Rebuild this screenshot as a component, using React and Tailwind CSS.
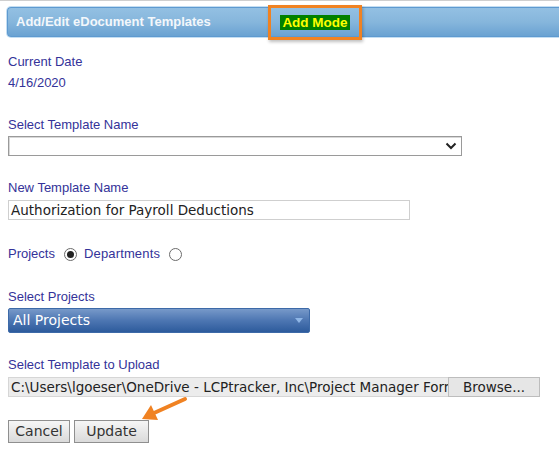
import React from "react";

const label = "block h-4 text-[13px] leading-4 text-[#343399]";
const field = "font-['DejaVu_Sans',sans-serif] text-[13.5px] text-[#222]";

function Radio({ checked }) {
  return (
    <span className="inline-flex h-[13px] w-[13px] items-center justify-center rounded-full border border-[#6b6b6b] bg-white">
      {checked ? <span className="h-[7px] w-[7px] rounded-full bg-[#222]" /> : null}
    </span>
  );
}

export default function App() {
  return (
    <div className="relative h-[459px] w-[559px] overflow-hidden bg-white font-['Liberation_Sans',Arial,sans-serif]">
      <div className="h-px w-full bg-[#cfcfcf]" />

      {/* header */}
      <div className="relative ml-[7px] mt-[6px] flex h-[30px] items-center rounded-l-[4px] border border-r-0 border-[#5e9ad0] bg-gradient-to-b from-[#93c0e3] via-[#86b6dc] to-[#6aa2d2] pl-[8px] shadow-[0_0_0_1px_#c4def2]">
        <span className="text-[13px] font-bold text-[#f3f7fb]">Add/Edit eDocument Templates</span>
        <div className="absolute left-[260px] top-[-3px] flex h-[35px] w-[94px] items-center justify-center border-[3px] border-[#f08222] shadow-[1px_2px_3px_rgba(0,0,0,0.25)]">
          <span className="bg-[#008000] px-[2px] text-[13.5px] font-bold leading-[15px] text-[#ffff00]">Add Mode</span>
        </div>
      </div>

      <div className="pl-[8px]">
        <span className={`${label} mt-[17px]`}>Current Date</span>
        <span className={`${label} mt-[5px]`}>4/16/2020</span>

        <span className={`${label} mt-[26px]`}>Select Template Name</span>
        <div className="mt-[3px] flex h-[20px] w-[454px] items-center justify-end border border-[#9a9a9a] bg-white pr-[4px] shadow-[inset_1px_1px_0_#d8d8d8]">
          <svg width="12" height="8" viewBox="0 0 12 8">
            <path d="M1.5 1.5 L6 6 L10.5 1.5" fill="none" stroke="#222" strokeWidth="2" />
          </svg>
        </div>

        <span className={`${label} mt-[24px]`}>New Template Name</span>
        <div className={`mt-[4px] flex h-[20px] w-[402px] items-center border border-[#cfcfcf] bg-white pl-[2px] ${field}`}>
          Authorization for Payroll Deductions
        </div>

        <div className="mt-[26px] flex h-4 items-center text-[13px] text-[#343399]">
          <span>Projects</span>
          <span className="ml-[9px] mr-[7px] flex"><Radio checked /></span>
          <span className="tracking-[0.15px]">Departments</span>
          <span className="ml-[9px] flex"><Radio /></span>
        </div>

        <span className={`${label} mt-[27px]`}>Select Projects</span>
        <div className="mt-[3px] flex h-[25px] w-[302px] items-center justify-between rounded-[2px] border border-[#3d6aa8] bg-gradient-to-b from-[#7799c9] via-[#4d76b2] to-[#2d5b9c] pl-[4px] pr-[6px]">
          <span className="font-['DejaVu_Sans',sans-serif] text-[14px] text-white">All Projects</span>
          <svg width="8" height="5" viewBox="0 0 8 5">
            <path d="M0 0 L8 0 L4 5 Z" fill="#8fb6e6" />
          </svg>
        </div>

        <span className={`${label} mt-[24px]`}>Select Template to Upload</span>
        <div className="mt-[4px] flex h-[20px] w-[532px]">
          <div className={`flex flex-1 items-center overflow-hidden whitespace-nowrap border border-r-0 border-[#d6d6d6] bg-[#ececec] pl-[2px] ${field}`}>
            C:\Users\lgoeser\OneDrive - LCPtracker, Inc\Project Manager Forms
          </div>
          <div className={`flex w-[92px] items-center justify-center border border-[#bdbdbd] bg-[#e6e6e6] ${field}`}>
            Browse...
          </div>
        </div>

        <div className={`mt-[23px] flex gap-[4px] ${field} text-[14px]`}>
          <div className="flex h-[23px] w-[62px] items-center justify-center border border-[#8f8f8f] bg-gradient-to-b from-[#f6f6f6] to-[#dadada] text-[#333]">
            Cancel
          </div>
          <div className="flex h-[23px] w-[75px] items-center justify-center border border-[#8f8f8f] bg-gradient-to-b from-[#f6f6f6] to-[#dadada] text-[#333]">
            Update
          </div>
        </div>
      </div>

      {/* callout arrow */}
      <svg className="absolute left-[138px] top-[394px]" width="54" height="30" viewBox="0 0 54 30">
        <path d="M47 5 L16 19" stroke="#f08222" strokeWidth="4" strokeLinecap="round" />
        <path d="M4 25 L13 11 L20 26 Z" fill="#f08222" />
      </svg>
    </div>
  );
}
